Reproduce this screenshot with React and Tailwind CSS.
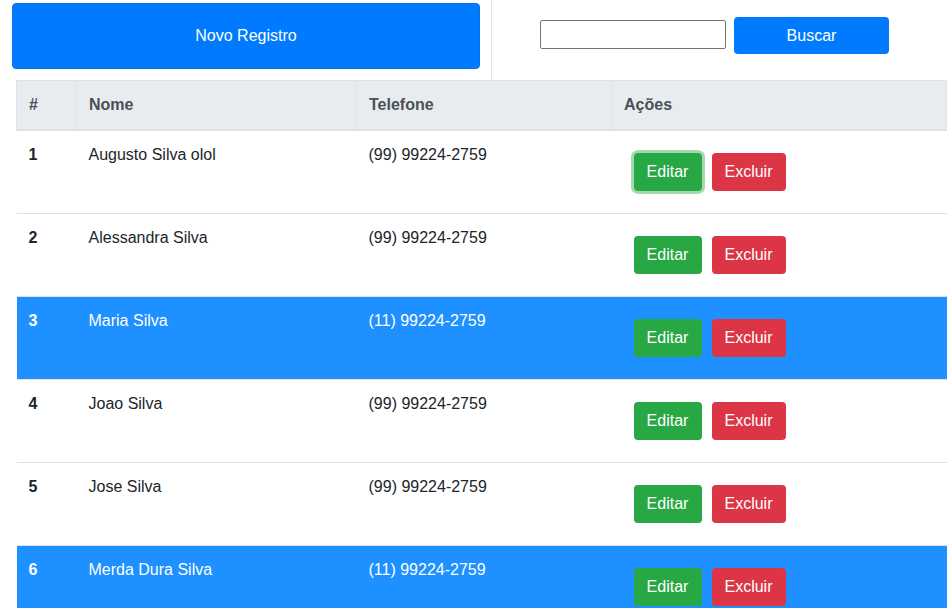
import React from "react";

const rows = [
  { id: 1, nome: "Augusto Silva olol", tel: "(99) 99224-2759", hl: false, focus: true },
  { id: 2, nome: "Alessandra Silva", tel: "(99) 99224-2759", hl: false },
  { id: 3, nome: "Maria Silva", tel: "(11) 99224-2759", hl: true },
  { id: 4, nome: "Joao Silva", tel: "(99) 99224-2759", hl: false },
  { id: 5, nome: "Jose Silva", tel: "(99) 99224-2759", hl: false },
  { id: 6, nome: "Merda Dura Silva", tel: "(11) 99224-2759", hl: true },
];

export default function App() {
  return (
    <div
      className="w-[948px] bg-white text-[16px] leading-6 text-[#212529]"
      style={{ fontFamily: '"Liberation Sans", Arial, sans-serif' }}
    >
      <div className="flex h-[80px]">
        <div className="w-[492px] border-r border-[#dee2e6] pl-[12px] pr-[11px] pt-[3px]">
          <button className="h-[66px] w-full rounded-[4px] border border-[#0a74e6] bg-[#007bff] text-white">
            Novo Registro
          </button>
        </div>
        <div className="flex flex-1 items-start pl-[48px] pt-[17px]">
          <input className="mt-[3px] h-[29px] w-[186px] rounded-[2px] border border-[#767676] bg-white" />
          <button className="ml-[8px] h-[37px] w-[155px] rounded-[4px] bg-[#007bff] text-white">
            Buscar
          </button>
        </div>
      </div>
      <table className="ml-[16px] w-[930px] table-fixed border-collapse">
        <colgroup>
          <col className="w-[60px]" />
          <col className="w-[280px]" />
          <col className="w-[255px]" />
          <col className="w-[335px]" />
        </colgroup>
        <thead>
          <tr className="bg-[#e9ecef] text-left font-bold text-[#495057]">
            <th className="border border-[#dee2e6] border-b-2 px-[12px] pt-[12px] pb-[12px]">#</th>
            <th className="border border-[#dee2e6] border-b-2 px-[12px] py-[12px]">Nome</th>
            <th className="border border-[#dee2e6] border-b-2 px-[12px] py-[12px]">Telefone</th>
            <th className="border border-[#dee2e6] border-b-2 px-[12px] py-[12px]">Ações</th>
          </tr>
        </thead>
        <tbody>
          {rows.map((r) => (
            <tr
              key={r.id}
              className={
                r.hl
                  ? "border-t border-[#dee2e6] bg-[#1e90ff] text-white"
                  : "border-t border-[#dee2e6] bg-white"
              }
            >
              <td className="h-[83px] px-[12px] pt-[12px] align-top font-bold">{r.id}</td>
              <td className="px-[12px] pt-[12px] align-top">{r.nome}</td>
              <td className="px-[12px] pt-[12px] align-top">{r.tel}</td>
              <td className="px-[12px] pt-[22px] pb-[22px] align-top">
                <div className="flex gap-[10px] pl-[10px]">
                  <button
                    className={
                      r.focus
                        ? "h-[38px] w-[68px] rounded-[4px] bg-[#28a745] text-white shadow-[0_0_0_3px_rgba(72,180,97,0.5)]"
                        : "h-[38px] w-[68px] rounded-[4px] bg-[#28a745] text-white"
                    }
                  >
                    Editar
                  </button>
                  <button className="h-[38px] w-[74px] rounded-[4px] bg-[#dc3545] text-white">
                    Excluir
                  </button>
                </div>
              </td>
            </tr>
          ))}
        </tbody>
      </table>
    </div>
  );
}
